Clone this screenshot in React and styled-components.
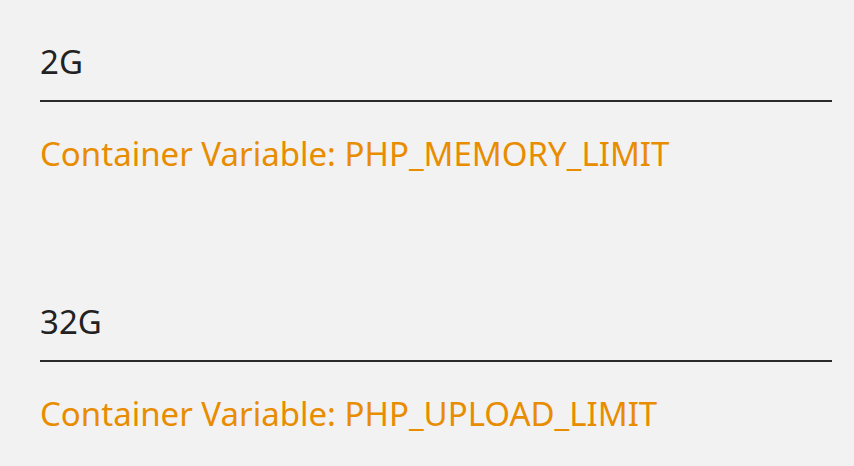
import React from 'react';
import styled, { createGlobalStyle } from 'styled-components';

const GlobalStyle = createGlobalStyle`
  html, body {
    margin: 0;
    padding: 0;
    background: #f2f2f2;
  }
  body {
    font-family: "Noto Sans", "Open Sans", sans-serif;
  }
`;

const Page = styled.div`
  width: 854px;
  height: 466px;
  overflow: hidden;
  padding: 39px 22px 0 40px;
  box-sizing: border-box;
  display: flex;
  flex-direction: column;
  gap: 123px;
`;

const Field = styled.div`
  display: flex;
  flex-direction: column;
`;

const Value = styled.div`
  font-size: 33px;
  line-height: 45px;
  color: #222;
  padding-bottom: 16px;
  border-bottom: 2px solid #2b2b2b;
`;

const Hint = styled.div`
  margin-top: 29px;
  font-size: 33px;
  line-height: 45px;
  color: #e88c00;
`;

const settings = [
  { value: '2G', name: 'PHP_MEMORY_LIMIT' },
  { value: '32G', name: 'PHP_UPLOAD_LIMIT' },
];

function App() {
  return (
    <>
      <GlobalStyle />
      <Page>
        {settings.map((s) => (
          <Field key={s.name}>
            <Value>{s.value}</Value>
            <Hint>Container Variable: {s.name}</Hint>
          </Field>
        ))}
      </Page>
    </>
  );
}

export default App;
